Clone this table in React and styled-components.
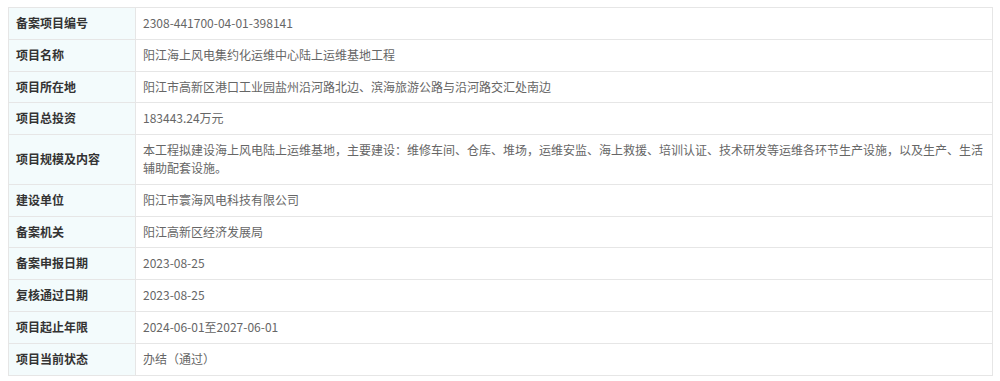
import React from 'react';
import styled, { createGlobalStyle } from 'styled-components';

const GlobalStyle = createGlobalStyle`
  html, body {
    margin: 0;
    padding: 0;
    background: #ffffff;
  }
  body {
    font-family: "Noto Sans CJK SC", "Microsoft YaHei", sans-serif;
  }
`;

const Page = styled.div`
  padding: 7px 7px 0 8px;
`;

const InfoTable = styled.table`
  width: 985px;
  border-collapse: collapse;
  table-layout: fixed;
  font-size: 12px;
  line-height: 17.8px;
`;

const LabelCol = styled.col`
  width: 127px;
`;

const Row = styled.tr``;

const Label = styled.th`
  padding: 6px 4px 7px 7px;
  background: #f3fbfc;
  border: 1px solid #e6e6e6;
  color: #333333;
  font-weight: 700;
  text-align: left;
  vertical-align: middle;
  white-space: nowrap;
`;

const Value = styled.td`
  padding: 6px 6px 7px 7px;
  border: 1px solid #e6e6e6;
  color: #666666;
  vertical-align: middle;
  word-break: break-all;
`;

const rows = [
  ['备案项目编号', '2308-441700-04-01-398141'],
  ['项目名称', '阳江海上风电集约化运维中心陆上运维基地工程'],
  ['项目所在地', '阳江市高新区港口工业园盐州沿河路北边、滨海旅游公路与沿河路交汇处南边'],
  ['项目总投资', '183443.24万元'],
  ['项目规模及内容', '本工程拟建设海上风电陆上运维基地，主要建设：维修车间、仓库、堆场，运维安监、海上救援、培训认证、技术研发等运维各环节生产设施，以及生产、生活辅助配套设施。'],
  ['建设单位', '阳江市寰海风电科技有限公司'],
  ['备案机关', '阳江高新区经济发展局'],
  ['备案申报日期', '2023-08-25'],
  ['复核通过日期', '2023-08-25'],
  ['项目起止年限', '2024-06-01至2027-06-01'],
  ['项目当前状态', '办结（通过）'],
];

const App = () => (
  <>
    <GlobalStyle />
    <Page>
      <InfoTable>
        <colgroup>
          <LabelCol />
          <col />
        </colgroup>
        <tbody>
          {rows.map(([label, value]) => (
            <Row key={label}>
              <Label>{label}</Label>
              <Value>{value}</Value>
            </Row>
          ))}
        </tbody>
      </InfoTable>
    </Page>
  </>
);

export default App;
